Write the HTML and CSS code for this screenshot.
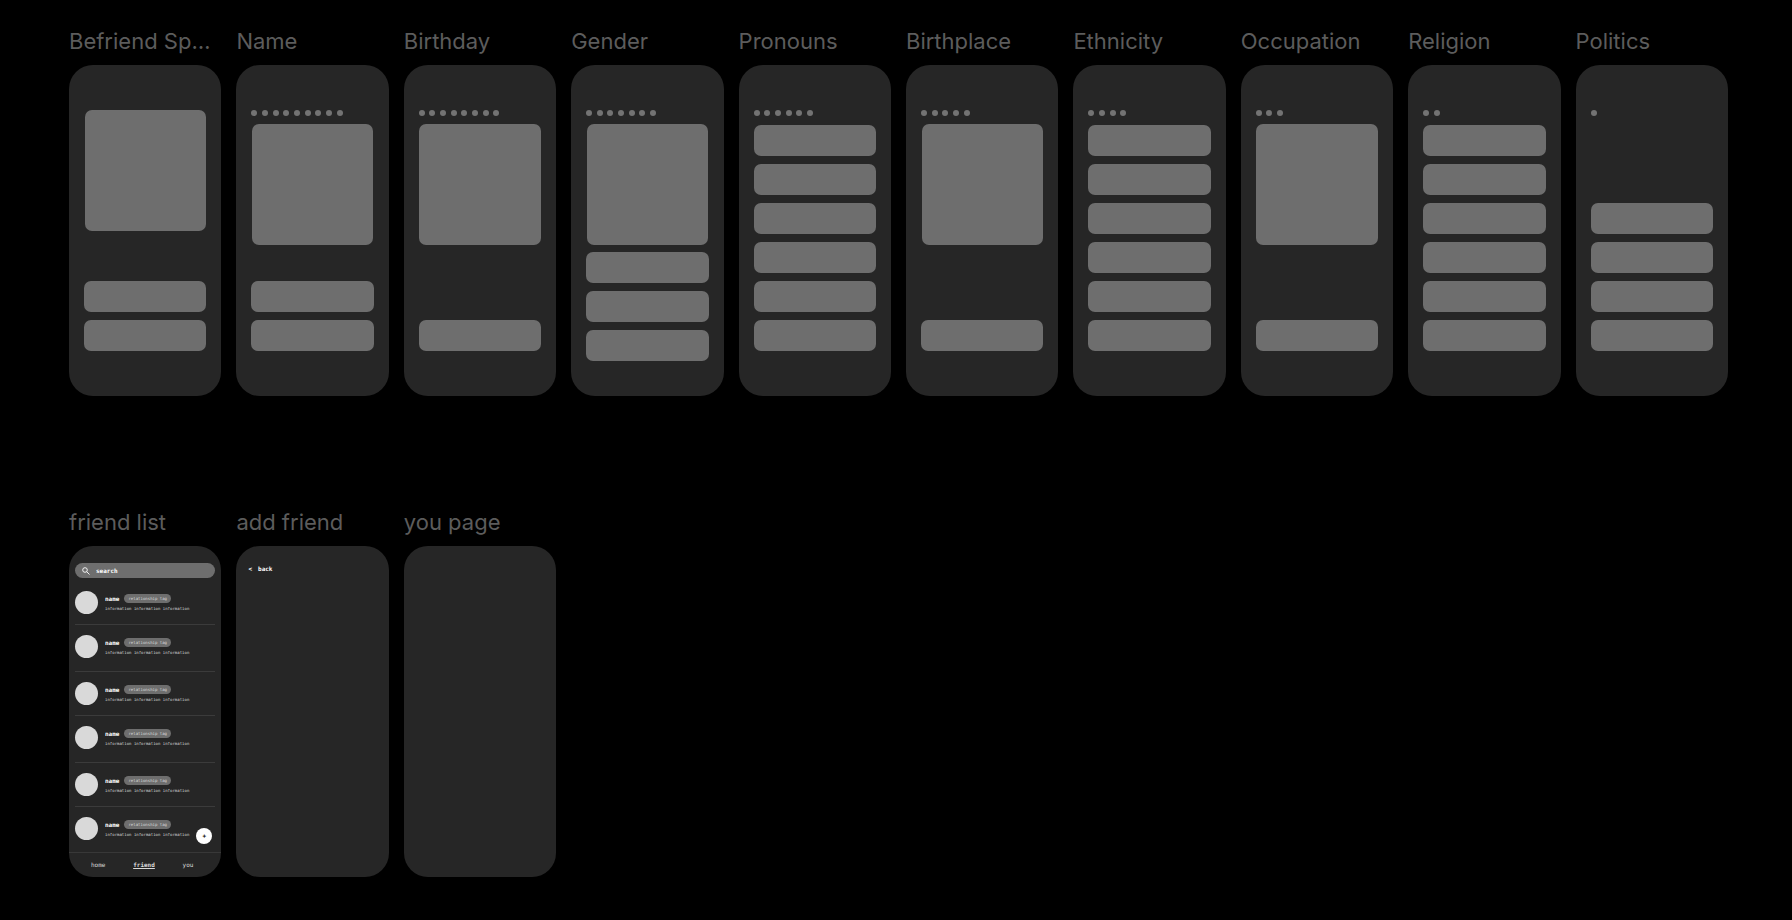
FILE: index.html
```html
<!DOCTYPE html>
<html lang="en">
<head>
  <meta charset="UTF-8">
  <meta name="viewport" content="width=device-width, initial-scale=1.0">
  <title>Befriend Wireframes</title>
  <link rel="stylesheet" href="styles.css">
</head>
<body>
  <main class="board">

    <!-- onboarding -->
    <section class="frame">
      <h2>Befriend Sp…</h2>
      <div class="phone">
        <div class="picture"></div>
        <div class="bars"><div></div><div></div></div>
      </div>
    </section>
    <section class="frame">
      <h2>Name</h2>
      <div class="phone">
        <div class="dots"><i></i><i></i><i></i><i></i><i></i><i></i><i></i><i></i><i></i></div>
        <div class="picture"></div>
        <div class="bars"><div></div><div></div></div>
      </div>
    </section>
    <section class="frame">
      <h2>Birthday</h2>
      <div class="phone">
        <div class="dots"><i></i><i></i><i></i><i></i><i></i><i></i><i></i><i></i></div>
        <div class="picture"></div>
        <div class="bars"><div></div></div>
      </div>
    </section>
    <section class="frame">
      <h2>Gender</h2>
      <div class="phone tall">
        <div class="dots"><i></i><i></i><i></i><i></i><i></i><i></i><i></i></div>
        <div class="picture"></div>
        <div class="bars"><div></div><div></div><div></div></div>
      </div>
    </section>
    <section class="frame">
      <h2>Pronouns</h2>
      <div class="phone">
        <div class="dots"><i></i><i></i><i></i><i></i><i></i><i></i></div>
        <div class="bars"><div></div><div></div><div></div><div></div><div></div><div></div></div>
      </div>
    </section>
    <section class="frame">
      <h2>Birthplace</h2>
      <div class="phone">
        <div class="dots"><i></i><i></i><i></i><i></i><i></i></div>
        <div class="picture"></div>
        <div class="bars"><div></div></div>
      </div>
    </section>
    <section class="frame">
      <h2>Ethnicity</h2>
      <div class="phone">
        <div class="dots"><i></i><i></i><i></i><i></i></div>
        <div class="bars"><div></div><div></div><div></div><div></div><div></div><div></div></div>
      </div>
    </section>
    <section class="frame">
      <h2>Occupation</h2>
      <div class="phone">
        <div class="dots"><i></i><i></i><i></i></div>
        <div class="picture"></div>
        <div class="bars"><div></div></div>
      </div>
    </section>
    <section class="frame">
      <h2>Religion</h2>
      <div class="phone">
        <div class="dots"><i></i><i></i></div>
        <div class="bars"><div></div><div></div><div></div><div></div><div></div><div></div></div>
      </div>
    </section>
    <section class="frame">
      <h2>Politics</h2>
      <div class="phone">
        <div class="dots"><i></i></div>
        <div class="bars"><div></div><div></div><div></div><div></div></div>
      </div>
    </section>

    <!-- main app -->
    <section class="frame">
      <h2>friend list</h2>
      <div class="phone app">
        <label class="search">
          <svg viewBox="0 0 8 8" fill="none" stroke="#fff" stroke-width="0.9" aria-hidden="true">
            <circle cx="3" cy="3" r="2.3"/>
            <path d="M4.7 4.7 7.5 7.5"/>
          </svg>
          <input type="text" placeholder="search" aria-label="search">
        </label>
        <ul class="friends">
          <li>
            <div class="avatar"></div>
            <div class="info">
              <div class="who"><b>name</b><span class="tag">relationship tag</span></div>
              <p>information information information</p>
            </div>
          </li>
          <li>
            <div class="avatar"></div>
            <div class="info">
              <div class="who"><b>name</b><span class="tag">relationship tag</span></div>
              <p>information information information</p>
            </div>
          </li>
          <li>
            <div class="avatar"></div>
            <div class="info">
              <div class="who"><b>name</b><span class="tag">relationship tag</span></div>
              <p>information information information</p>
            </div>
          </li>
          <li>
            <div class="avatar"></div>
            <div class="info">
              <div class="who"><b>name</b><span class="tag">relationship tag</span></div>
              <p>information information information</p>
            </div>
          </li>
          <li>
            <div class="avatar"></div>
            <div class="info">
              <div class="who"><b>name</b><span class="tag">relationship tag</span></div>
              <p>information information information</p>
            </div>
          </li>
          <li>
            <div class="avatar"></div>
            <div class="info">
              <div class="who"><b>name</b><span class="tag">relationship tag</span></div>
              <p>information information information</p>
            </div>
          </li>
        </ul>
        <button class="add" type="button">+</button>
        <nav>
          <a href="#">home</a>
          <a href="#" class="active">friend</a>
          <a href="#">you</a>
        </nav>
      </div>
    </section>
    <section class="frame">
      <h2>add friend</h2>
      <div class="phone app">
        <button class="back" type="button"><span>&lt;</span><span>back</span></button>
      </div>
    </section>
    <section class="frame">
      <h2>you page</h2>
      <div class="phone app"></div>
    </section>

  </main>
</body>
</html>
```

FILE: styles.css
```css
* {
  box-sizing: border-box;
}
body {
  margin: 0;
  background-color: #000;
  font-family: Inter, sans-serif;
}
.board {
  display: grid;
  grid-template-columns: repeat(10, minmax(0, 1fr));
  gap: 112px 15px;
  padding: 27px 64px 27px 69px;
}
.frame {
  display: flex;
  flex-direction: column;
  gap: 10px;
}
h2 {
  margin: 0;
  font-size: 22px;
  font-weight: 400;
  line-height: 28px;
  color: #5c5c5c;
  white-space: nowrap;
}
.phone {
  position: relative;
  display: flex;
  flex-direction: column;
  min-height: 331px;
  padding: 45px 15px;
  border-radius: 24px;
  background-color: #262626;
  overflow: hidden;
}
.phone.tall {
  padding-bottom: 35px;
}

/* onboarding blocks */
.dots {
  display: flex;
  gap: 3.8%;
  margin-bottom: 8px;
}
.dots i {
  width: 6px;
  height: 6px;
  border-radius: 50%;
  background-color: #737373;
}
.picture {
  width: 99%;
  aspect-ratio: 1;
  margin: 0 auto;
  border-radius: 7px;
  background-color: #6e6e6e;
}
.bars {
  display: flex;
  flex-direction: column;
  gap: 8px;
  margin-top: auto;
}
.bars div {
  height: 31px;
  border-radius: 7px;
  background-color: #6e6e6e;
}

/* app screens */
.phone.app {
  padding: 17px 0 0;
  font-family: "DejaVu Sans Mono", "Liberation Mono", monospace;
  font-size: 6px;
  color: #fff;
}
.search {
  display: flex;
  align-items: center;
  gap: 6px;
  height: 15px;
  margin: 0 6px;
  padding: 0 7px;
  border-radius: 8px;
  background-color: #6e6e6e;
}
.search svg {
  width: 8px;
  height: 8px;
}
.search input {
  flex: 1;
  min-width: 0;
  padding: 0;
  border: none;
  outline: none;
  background: none;
  font: inherit;
  font-weight: 700;
  color: #fff;
}
.search input::placeholder {
  color: #fff;
  opacity: 1;
}
.friends {
  list-style: none;
  margin: 3px 6px 0;
  padding: 0;
}
.friends li {
  display: flex;
  align-items: center;
  gap: 7px;
  padding: 10px 0;
  border-bottom: 1px solid #3b3b3b;
}
.friends li:nth-child(even) {
  padding-bottom: 13px;
}
.friends li:last-child {
  padding-bottom: 0;
  border-bottom: none;
}
.avatar {
  width: 23px;
  height: 23px;
  border-radius: 50%;
  background-color: #d9d9d9;
}
.who {
  display: flex;
  align-items: center;
  gap: 5px;
  line-height: 9px;
}
.tag {
  padding: 0 4px;
  border-radius: 5px;
  background-color: #6e6e6e;
  font-size: 4px;
  color: #d9d9d9;
}
.info p {
  margin: 3px 0 0;
  font-size: 4px;
  line-height: 5px;
  color: #d9d9d9;
  white-space: nowrap;
}
.add {
  position: absolute;
  right: 9px;
  bottom: 33px;
  width: 16px;
  height: 16px;
  padding: 0;
  border: none;
  border-radius: 50%;
  background-color: #fff;
  font: inherit;
  font-weight: 700;
  line-height: 16px;
  color: #000;
}
nav {
  display: flex;
  justify-content: space-between;
  margin-top: auto;
  padding: 0 28px 0 22px;
  border-top: 1px solid #383838;
  line-height: 24px;
}
nav a {
  color: #d9d9d9;
  text-decoration: none;
}
nav a.active {
  font-weight: 700;
  text-decoration: underline;
}
.back {
  display: flex;
  gap: 6px;
  align-self: flex-start;
  margin-left: 12px;
  padding: 0;
  border: none;
  background: none;
  font: inherit;
  font-weight: 700;
  line-height: 12px;
  color: #fff;
}
```
